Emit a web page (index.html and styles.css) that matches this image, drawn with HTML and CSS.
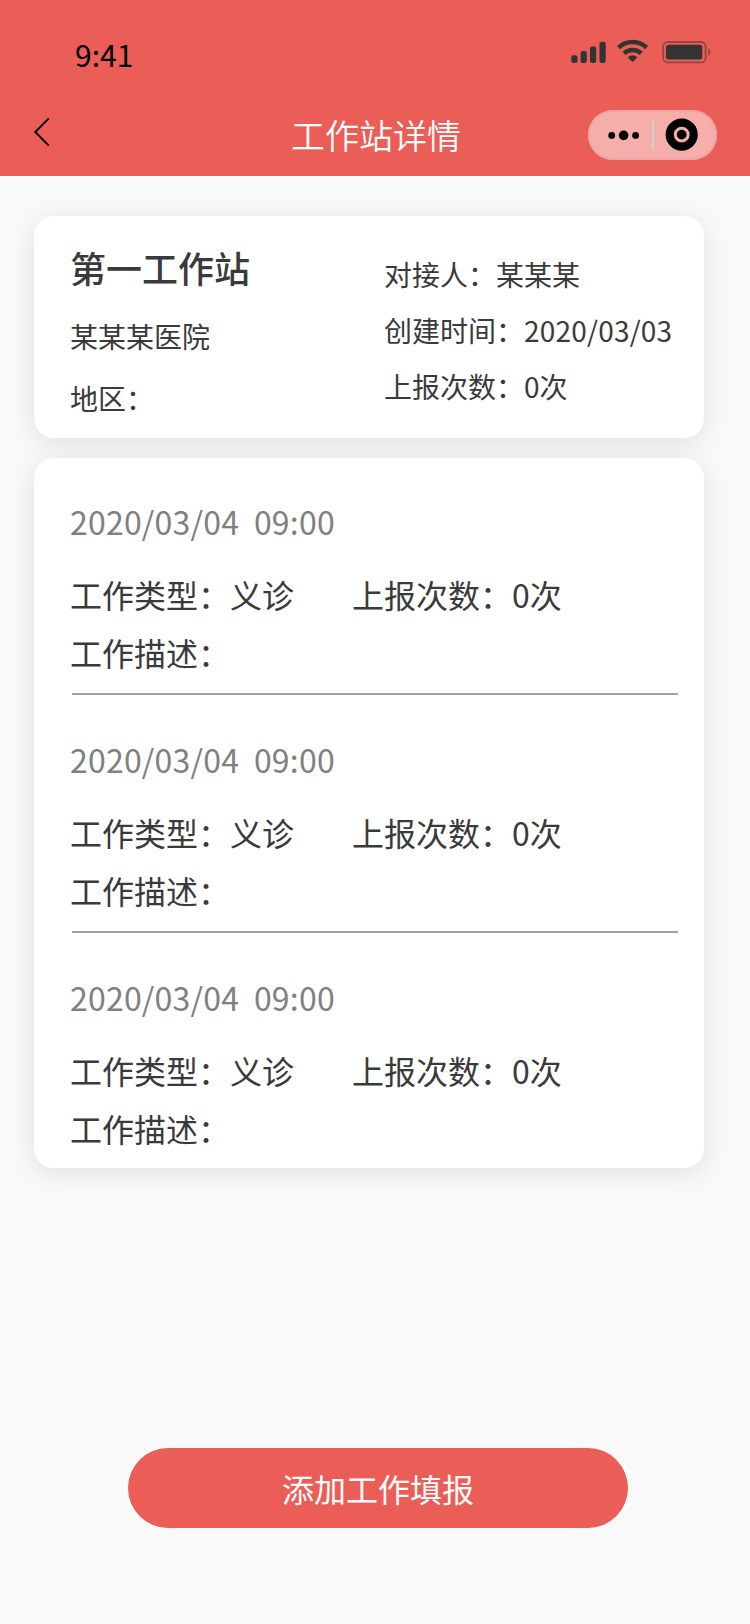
FILE: index.html
```html
<!DOCTYPE html>
<html lang="zh-CN">
<head>
    <meta charset="UTF-8">
    <meta name="viewport" content="width=device-width, initial-scale=1.0">
    <title>工作站详情</title>
    <link rel="stylesheet" href="styles.css">
</head>
<body>

<header class="header">
    <div class="status">
        <span class="time">9:41</span>
        <svg class="status-icons" width="144" height="30" viewBox="0 0 144 30">
            <!-- 信号 -->
            <g fill="#333">
                <rect x="3.3" y="17.2" width="6.2" height="7.9" rx="2"/>
                <rect x="12.6" y="13.1" width="6.2" height="12" rx="2"/>
                <rect x="22" y="8.4" width="6.2" height="16.7" rx="2"/>
                <rect x="31.5" y="3.8" width="6.2" height="21.3" rx="2"/>
            </g>
            <!-- wifi -->
            <g fill="none" stroke="#333" stroke-width="4.4">
                <path d="M50.6 9.6 A20.5 20.5 0 0 1 78.6 9.6"/>
                <path d="M56 15.4 A12.4 12.4 0 0 1 73.2 15.4"/>
            </g>
            <path d="M59.8 19.3 Q64.6 15.1 69.4 19.3 L65.3 23.6 Q64.6 24.3 63.9 23.6 Z" fill="#333"/>
            <!-- 电池 -->
            <rect x="95.2" y="4" width="42.4" height="20.4" rx="4.5" fill="none" stroke="#333" stroke-opacity="0.5" stroke-width="1.8"/>
            <rect x="98" y="6.8" width="36.3" height="14.8" rx="2.5" fill="#333"/>
            <path d="M140 10.2 Q142.8 11.4 142.8 14.2 Q142.8 17 140 18.2 Z" fill="#333" fill-opacity="0.4"/>
        </svg>
    </div>
    <div class="navbar">
        <svg class="back" width="20" height="32" viewBox="0 0 20 32">
            <path d="M15.8 2.3 L2.2 16 L15.8 29.6" fill="none" stroke="#000" stroke-width="1.9"/>
        </svg>
        <h1 class="page-title">工作站详情</h1>
        <div class="capsule">
            <svg width="130" height="50" viewBox="0 0 130 50">
                <circle cx="23.7" cy="25.4" r="3.4"/>
                <circle cx="35.6" cy="25.4" r="4.8"/>
                <circle cx="47.6" cy="25.4" r="3.4"/>
                <rect x="64" y="10" width="2" height="30" fill="#d2cfcf"/>
                <circle cx="93.7" cy="24.6" r="12" fill="none" stroke="#000" stroke-width="8.2"/>
                <circle cx="93.7" cy="24.6" r="4.9"/>
            </svg>
        </div>
    </div>
</header>

<main class="content">
    <section class="card station">
        <div class="station-left">
            <h2 class="station-name">第一工作站</h2>
            <p>某某某医院</p>
            <p>地区：</p>
        </div>
        <div class="station-right">
            <p>对接人：某某某</p>
            <p>创建时间：<span class="created">2020/03/03</span></p>
            <p>上报次数：0次</p>
        </div>
    </section>

    <section class="card list">
        <div class="item">
            <div class="date">2020/03/04&nbsp; 09:00</div>
            <div class="row"><span>工作类型：义诊</span><span>上报次数：0次</span></div>
            <div class="row">工作描述：</div>
        </div>
        <div class="item">
            <div class="date">2020/03/04&nbsp; 09:00</div>
            <div class="row"><span>工作类型：义诊</span><span>上报次数：0次</span></div>
            <div class="row">工作描述：</div>
        </div>
        <div class="item">
            <div class="date">2020/03/04&nbsp; 09:00</div>
            <div class="row"><span>工作类型：义诊</span><span>上报次数：0次</span></div>
            <div class="row">工作描述：</div>
        </div>
    </section>
</main>

<button class="add" type="button">添加工作填报</button>

</body>
</html>
```

FILE: styles.css
```css
*{
    box-sizing: border-box;
    margin: 0;
    padding: 0;
}

body{
    display: flex;
    flex-direction: column;
    width: 750px;
    height: 1624px;
    background-color: #f9f9f9;
    color: #3a3a3a;
    font-family: "Noto Sans CJK SC", sans-serif;
}

.header{
    height: 176px;
    background-color: #eb5e57;
}

.status{
    display: flex;
    justify-content: space-between;
    height: 110px;
    padding: 32px 38px 0 75px;
}

.time{
    color: #000;
    font-size: 30px;
    line-height: 44px;
}

.status-icons{
    margin-top: 6px;
}

.navbar{
    display: grid;
    grid-template-columns: 130px 1fr 130px;
    align-items: start;
    height: 50px;
    padding: 0 32px 0 33px;
}

.back{
    margin-top: 6px;
}

.page-title{
    padding-left: 1px;
    color: #fff;
    font-size: 34px;
    font-weight: 350;
    line-height: 50px;
    text-align: center;
}

.capsule{
    width: 129px;
    height: 50px;
    border-radius: 25px;
    background-color: #f5aeaa;
    box-shadow: inset 0 0 0 2px #eca6a3;
}

.capsule svg{
    display: block;
}

.content{
    display: flex;
    flex-direction: column;
    gap: 20px;
    padding: 40px 46px 0 34px;
}

.card{
    border-radius: 20px;
    background-color: #fff;
    box-shadow: 0 5px 26px rgba(0, 0, 0, 0.1);
}

.station{
    display: grid;
    grid-template-columns: 314px 1fr;
    height: 222px;
    padding-left: 36px;
    font-size: 28px;
    white-space: nowrap;
}

.station-left{
    padding-top: 25px;
    line-height: 62px;
}

.station-name{
    margin-bottom: 12px;
    font-size: 36px;
    font-weight: 500;
    line-height: 52px;
}

.station-right{
    padding-top: 30px;
    line-height: 56px;
}

.created{
    letter-spacing: 0.2px;
}

.list{
    height: 710px;
    padding: 0 26px 0 38px;
}

.item{
    padding: 39px 0 12px;
    border-bottom: 2px solid #a1a1a1;
}

.item:first-child{
    padding-top: 38px;
}

.item:last-child{
    border-bottom: none;
}

.date{
    margin: 0 0 19px -2px;
    color: #808080;
    font-size: 32px;
    letter-spacing: 0.2px;
    line-height: 50px;
}

.row{
    display: flex;
    gap: 58px;
    margin-left: -2px;
    font-size: 32px;
    line-height: 58px;
}

.add{
    width: 500px;
    height: 80px;
    margin: 280px 0 0 128px;
    border: none;
    border-radius: 40px;
    background-color: #eb5e57;
    color: #fff;
    font-family: inherit;
    font-size: 32px;
    line-height: 80px;
}
```
